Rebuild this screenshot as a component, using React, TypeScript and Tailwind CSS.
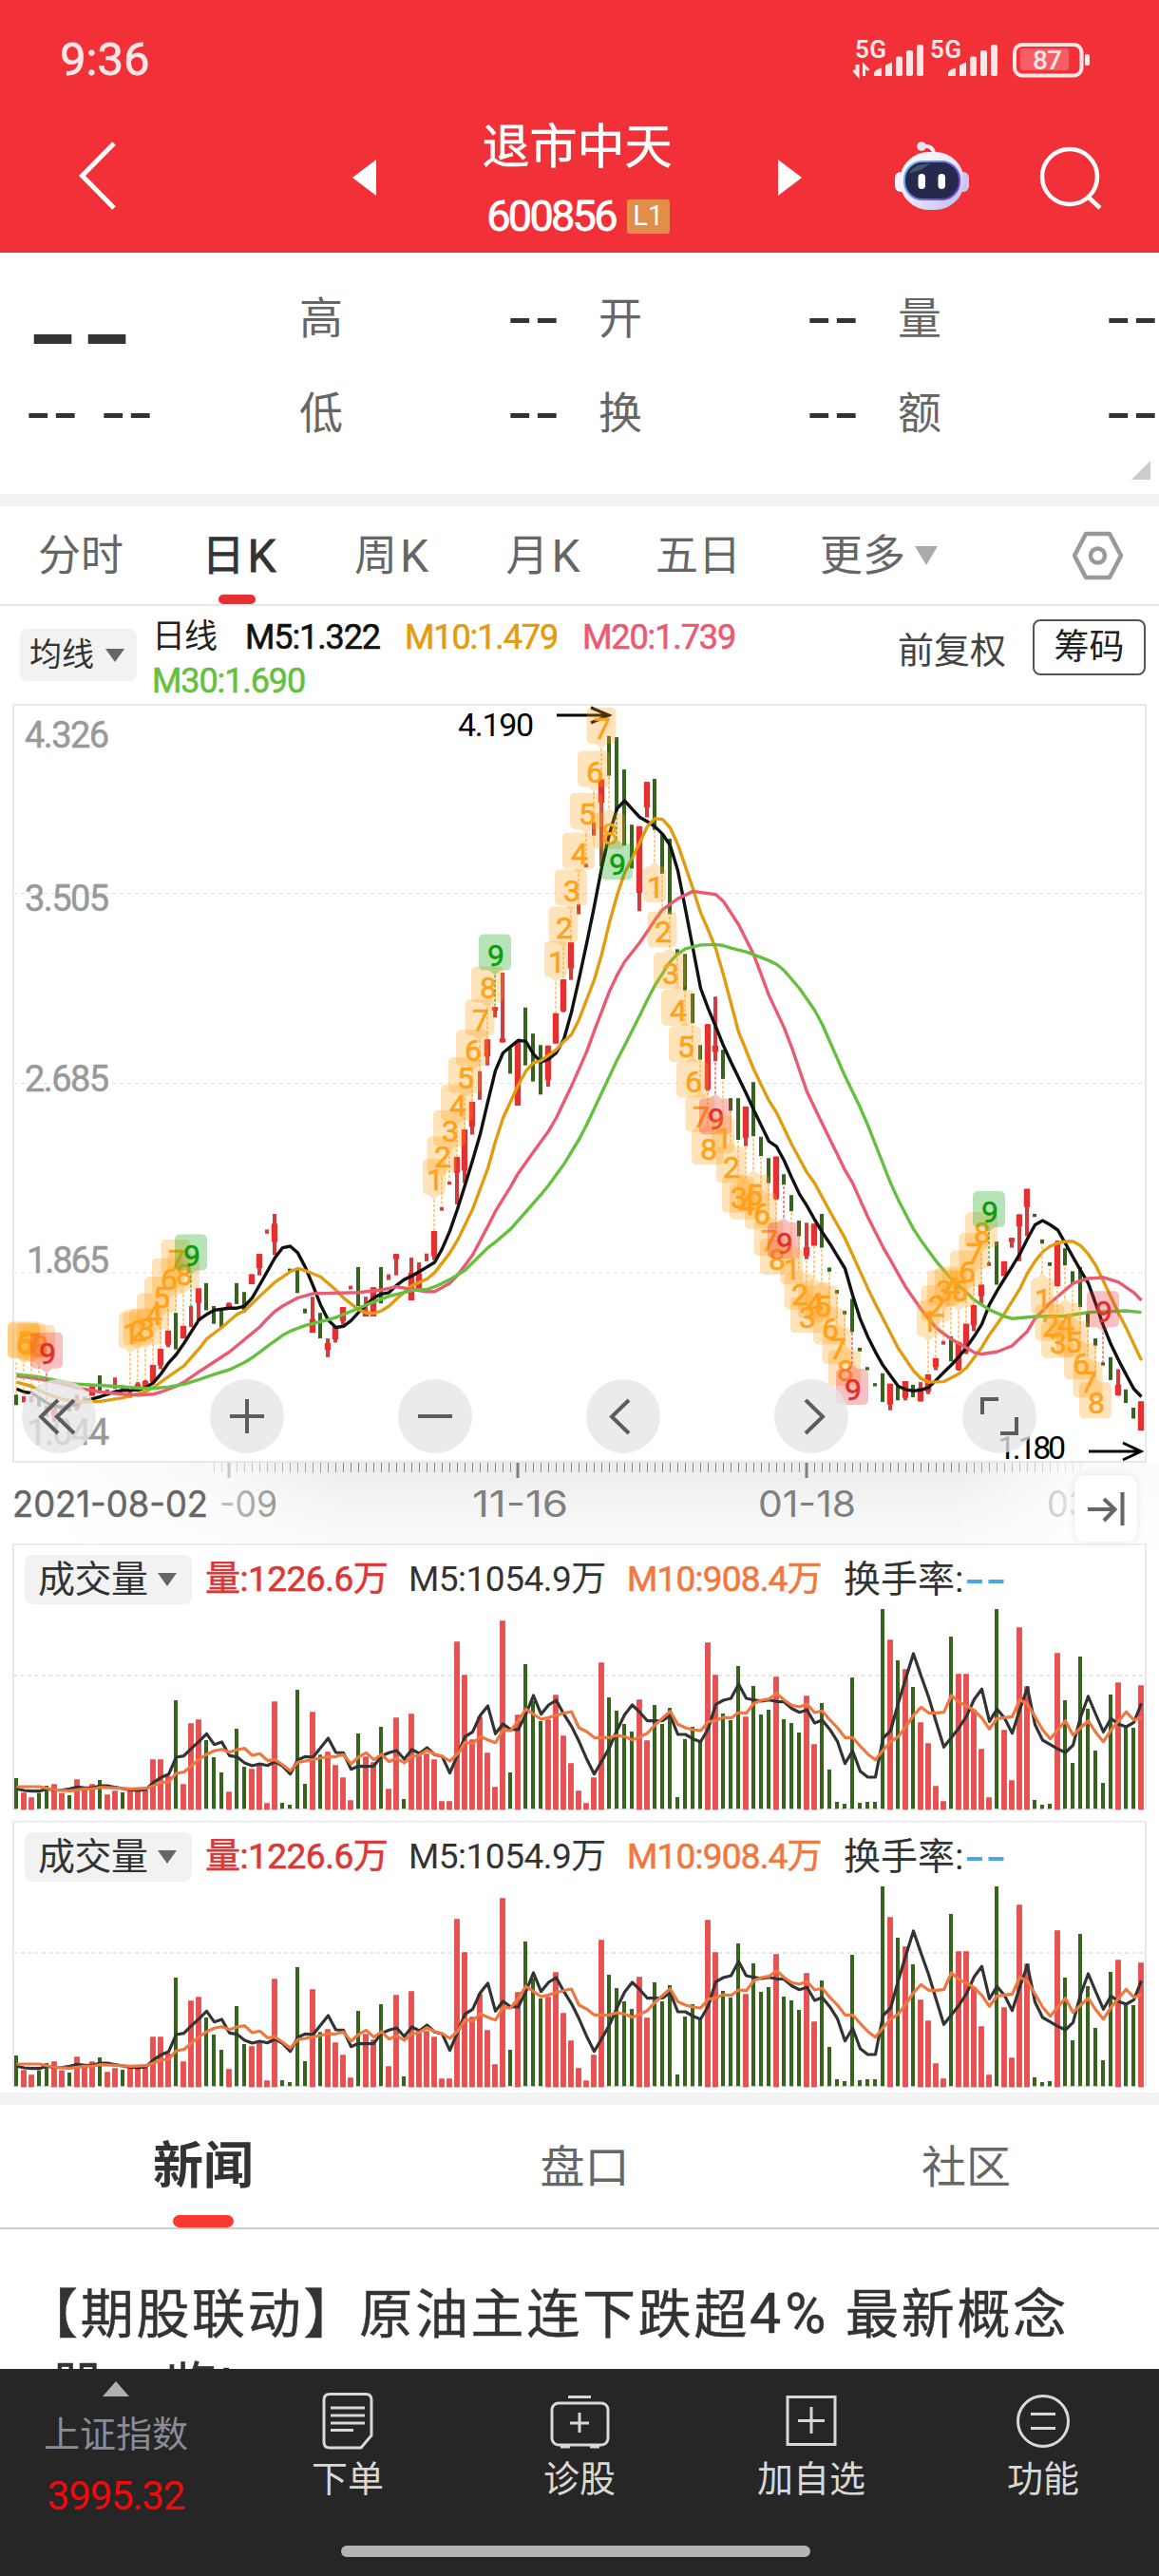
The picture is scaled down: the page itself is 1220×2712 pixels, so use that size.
import React from "react";

type Candle = [number, "r" | "g", number, number, number?, number?];
type Badge = [number, number, number, "up" | "down"];

const numFont = "font-[Roboto,'Noto_Sans_CJK_SC',sans-serif]";

// index, colour, high, low, body top, body bottom
const candles: Candle[] = [
  [0, "g", 1346, 1366], [1, "r", 1349, 1361], [2, "r", 1349, 1361], [3, "g", 1350, 1369], [4, "g", 1368, 1388],
  [5, "r", 1362, 1398, 1366, 1385], [6, "r", 1372, 1380], [7, "g", 1370, 1378], [8, "r", 1346, 1376, 1355, 1372], [9, "r", 1350, 1362],
  [10, "r", 1330, 1348, 1330, 1348], [11, "g", 1309, 1340], [12, "r", 1336, 1348], [13, "r", 1313, 1335], [14, "g", 1328, 1340],
  [15, "r", 1338, 1352], [16, "r", 1322, 1338, 1326, 1338], [17, "r", 1318, 1334, 1320, 1334], [18, "r", 1289, 1322, 1289, 1322], [19, "r", 1258, 1297, 1258, 1290],
  [20, "r", 1223, 1255, 1223, 1250], [21, "g", 1189, 1259], [22, "r", 1214, 1238, 1214, 1238], [23, "r", 1176, 1216], [24, "r", 1142, 1205, 1142, 1170],
  [25, "g", 1132, 1184], [26, "g", 1176, 1210], [27, "g", 1184, 1218], [28, "r", 1169, 1180, 1171, 1180], [29, "g", 1132, 1172],
  [30, "g", 1149, 1188], [31, "r", 1115, 1134, 1115, 1134], [32, "r", 1076, 1117, 1076, 1103], [33, "r", 1029, 1037], [34, "r", 999, 1078, 1018, 1053],
  [36, "g", 1104, 1109], [37, "g", 1105, 1151], [38, "g", 1181, 1190], [39, "r", 1158, 1227, 1201, 1227], [40, "g", 1189, 1238],
  [41, "r", 1238, 1274, 1247, 1260], [42, "r", 1215, 1246, 1215, 1240], [43, "r", 1178, 1212, 1178, 1205], [44, "r", 1137, 1144], [45, "g", 1101, 1176],
  [46, "r", 1158, 1196, 1185, 1196], [47, "r", 1140, 1196, 1140, 1196], [48, "g", 1101, 1171], [49, "r", 1115, 1126], [50, "r", 1076, 1117, 1076, 1086],
  [52, "r", 1083, 1165, 1112, 1165], [53, "r", 1092, 1145, 1113, 1145], [54, "r", 1075, 1090], [55, "r", 1032, 1088, 1032, 1080], [56, "r", 986, 993],
  [57, "r", 937, 943], [58, "r", 890, 981, 890, 920], [59, "r", 837, 940, 837, 916], [60, "r", 784, 847, 784, 832], [61, "r", 725, 780],
  [62, "r", 664, 714, 664, 697], [63, "r", 602, 622, 602, 609], [64, "r", 536, 670, 662, 670], [65, "g", 681, 730], [66, "r", 668, 791, 668, 791],
  [67, "g", 603, 714], [68, "g", 653, 745], [69, "g", 675, 770], [70, "r", 676, 755, 676, 742], [71, "r", 614, 672, 614, 672],
  [72, "r", 549, 612, 549, 610], [73, "r", 478, 550, 478, 528], [74, "r", 405, 424], [75, "r", 327, 334], [76, "r", 248, 273],
  [77, "r", 165, 332, 165, 210], [78, "g", 82, 158], [79, "g", 84, 225], [80, "g", 146, 292], [81, "g", 252, 336],
  [82, "r", 255, 418, 255, 383], [83, "r", 170, 238, 170, 219], [84, "g", 164, 262], [85, "g", 270, 346], [86, "g", 279, 424],
  [87, "g", 491, 500], [88, "g", 500, 570], [89, "g", 576, 633], [90, "g", 675, 703], [91, "r", 635, 763, 635, 760],
  [92, "r", 582, 706, 676, 688], [93, "g", 684, 740], [94, "g", 777, 801], [95, "g", 777, 857], [96, "r", 793, 869, 793, 853],
  [97, "g", 746, 850], [98, "g", 851, 888], [99, "g", 892, 940], [100, "r", 889, 972, 889, 970], [101, "g", 923, 943],
  [102, "g", 963, 994], [103, "g", 1012, 1042], [104, "r", 1016, 1086, 1063, 1080], [105, "r", 1018, 1060, 1018, 1060], [106, "g", 999, 1064],
  [107, "g", 1102, 1110], [108, "g", 1145, 1152], [109, "g", 1185, 1192], [110, "g", 1162, 1226], [111, "g", 1256, 1263],
  [112, "g", 1293, 1299], [113, "g", 1324, 1330], [114, "g", 1305, 1360], [115, "r", 1325, 1376, 1325, 1365], [116, "g", 1330, 1357],
  [117, "r", 1320, 1357, 1320, 1352], [118, "g", 1327, 1351], [119, "r", 1322, 1359, 1333, 1359], [120, "r", 1307, 1345, 1307, 1340], [121, "r", 1276, 1299, 1276, 1293],
  [122, "r", 1243, 1250], [123, "g", 1234, 1282], [124, "r", 1245, 1300, 1245, 1298], [125, "r", 1210, 1268, 1210, 1263], [126, "r", 1174, 1224, 1174, 1213],
  [127, "r", 1135, 1171, 1135, 1157], [128, "r", 1092, 1099], [129, "g", 1052, 1135], [130, "r", 1090, 1118, 1090, 1118], [131, "r", 1045, 1064, 1045, 1053],
  [132, "r", 1000, 1090, 1000, 1023], [133, "r", 951, 1042, 951, 986], [134, "g", 999, 1005], [135, "g", 1048, 1056], [136, "g", 1092, 1099],
  [137, "r", 1050, 1138, 1053, 1138], [138, "g", 1065, 1098], [139, "g", 1109, 1135], [140, "g", 1101, 1178], [141, "g", 1190, 1216],
  [142, "g", 1238, 1252], [143, "g", 1284, 1290], [144, "g", 1274, 1318], [145, "r", 1297, 1348, 1327, 1347], [146, "g", 1336, 1362],
  [147, "g", 1371, 1392], [148, "r", 1359, 1415, 1359, 1415],
];

const ma5 = "0:1335 1:1341 2:1343 3:1352 4:1362 5:1368 6:1370 7:1367 8:1363 9:1358 10:1354 11:1350 12:1345 13:1340 14:1338 16:1337 17:1332 18:1323 19:1306 20:1285 21:1269 22:1248 23:1225 24:1202 25:1192 26:1184 27:1182 28:1180 29:1180 30:1176 31:1160 32:1135 33:1109 34:1083 35:1064 36:1061 37:1074 38:1102 39:1137 40:1174 41:1203 42:1217 43:1215 44:1204 45:1188 46:1174 47:1160 48:1153 49:1150 50:1136 51:1125 52:1118 53:1110 54:1101 55:1092 56:1066 57:1032 58:990 59:944 60:896 61:846 62:784 63:724 64:690 65:678 66:666 67:668 68:692 69:708 70:702 71:690 72:664 73:612 74:548 75:480 76:409 77:333 78:270 79:221 80:206 81:222 82:238 83:246 84:256 85:270 86:292 87:340 88:414 89:490 90:566 91:605 92:640 93:676 94:708 95:738 96:768 97:800 98:830 99:860 100:870 101:897 102:930 103:961 104:984 105:1010 106:1034 107:1056 108:1080 109:1104 110:1155 111:1201 112:1235 113:1264 114:1290 115:1310 116:1330 117:1336 118:1339 119:1337 120:1332 121:1318 122:1303 123:1289 124:1273 125:1255 126:1234 127:1211 128:1173 129:1147 130:1123 131:1100 132:1076 133:1047 134:1020 135:1012 136:1020 137:1030 138:1056 139:1082 140:1108 141:1132 142:1172 143:1214 144:1250 145:1280 146:1308 147:1335 148:1350";
const ma10 = "0:1322 2:1330 4:1345 6:1355 8:1360 11:1359 14:1352 17:1340 18:1332 20:1311 22:1291 24:1258 25:1239 27:1217 29:1192 30:1185 32:1157 34:1130 36:1110 37:1104 38:1108 40:1120 42:1145 43:1160 45:1183 46:1189 47:1190 48:1185 49:1176 50:1162 52:1137 54:1124 55:1112 57:1074 58:1050 60:990 62:912 63:860 64:815 66:752 67:725 68:709 69:705 71:684 72:668 73:655 74:626 76:550 77:500 78:440 79:388 80:344 81:316 82:286 83:255 84:240 85:242 86:258 87:290 89:375 90:421 91:454 92:490 93:540 95:650 97:722 99:782 100:805 102:866 104:920 105:940 107:994 109:1046 112:1142 113:1172 114:1200 116:1257 118:1300 119:1315 120:1322 122:1321 124:1306 125:1294 127:1255 128:1231 130:1190 132:1143 133:1113 134:1090 135:1072 136:1061 137:1055 138:1052 139:1052 140:1060 141:1076 142:1098 143:1128 145:1190 146:1218 148:1280";
const ma20 = "0:1310 3:1316 6:1325 8:1333 11:1341 14:1345 16:1347 18:1345 19:1341 21:1330 22:1322 24:1302 26:1283 28:1264 30:1240 32:1216 33:1200 34:1186 35:1176 37:1160 39:1152 45:1150 46:1148 48:1145 49:1142 50:1139 52:1144 54:1148 55:1148 57:1132 58:1117 60:1078 62:1023 63:994 65:947 66:921 68:880 70:840 71:815 73:754 75:688 76:648 77:610 78:572 79:541 80:515 82:478 84:435 85:415 87:394 89:380 92:386 93:399 95:444 97:502 99:580 101:642 102:680 104:765 106:826 108:885 109:915 110:940 112:1005 114:1063 115:1088 117:1140 119:1182 121:1218 123:1240 125:1256 126:1265 127:1268 129:1264 131:1252 133:1224 134:1200 136:1170 138:1145 139:1132 141:1123 143:1121 145:1130 147:1150 148:1165";
const ma30 = "0:1307 3:1312 5:1318 8:1326 12:1329 16:1333 18:1334 20:1331 22:1326 24:1317 26:1307 28:1298 30:1284 31:1275 33:1253 35:1232 36:1224 38:1213 40:1206 42:1198 45:1180 47:1168 49:1157 52:1146 54:1144 55:1139 57:1125 59:1107 62:1064 63:1053 65:1028 67:995 69:962 70:944 72:904 74:856 75:828 77:766 79:704 80:676 82:618 83:588 84:560 86:515 87:500 88:490 90:483 92:482 93:484 94:489 96:496 98:507 99:513 100:520 101:532 103:566 105:608 106:635 109:735 110:765 111:795 112:829 113:866 115:940 116:972 118:1028 119:1050 121:1090 123:1124 125:1150 126:1164 128:1183 130:1196 131:1200 134:1196 138:1195 141:1188 146:1185 148:1188";

// index, digit, centre, side of the candle
const badges: Badge[] = [
  [0, 5, 1240, "up"], [1, 6, 1243, "up"], [2, 7, 1243, "up"], [3, 8, 1247, "up"], [4, 9, 1261, "up"],
  [15, 1, 1223, "up"], [16, 2, 1217, "up"], [17, 3, 1215, "up"], [18, 4, 1186, "up"], [19, 5, 1154, "up"],
  [20, 6, 1119, "up"], [21, 7, 1083, "up"], [22, 8, 1110, "up"], [23, 9, 1073, "up"],
  [55, 1, 928, "up"], [56, 2, 885, "up"], [57, 3, 835, "up"], [58, 4, 786, "up"], [59, 5, 733, "up"],
  [60, 6, 680, "up"], [61, 7, 622, "up"], [62, 8, 559, "up"], [63, 9, 497, "up"],
  [71, 1, 510, "up"], [72, 2, 444, "up"], [73, 3, 373, "up"], [74, 4, 302, "up"], [75, 5, 226, "up"],
  [76, 6, 145, "up"], [77, 7, 62, "up"], [78, 8, 264, "down"], [79, 9, 323, "down"],
  [84, 1, 367, "down"], [85, 2, 453, "down"], [86, 3, 532, "down"], [87, 4, 603, "down"], [88, 5, 673, "down"],
  [89, 6, 741, "down"], [90, 7, 807, "down"], [91, 8, 870, "down"], [92, 9, 812, "down"],
  [93, 1, 848, "down"], [94, 2, 905, "down"], [95, 3, 962, "down"], [96, 4, 975, "down"], [97, 5, 958, "down"],
  [98, 6, 993, "down"], [99, 7, 1045, "down"], [100, 8, 1081, "down"], [101, 9, 1050, "down"],
  [102, 1, 1100, "down"], [103, 2, 1148, "down"], [104, 3, 1193, "down"], [105, 4, 1165, "down"], [106, 5, 1171, "down"],
  [107, 6, 1215, "down"], [108, 7, 1253, "down"], [109, 8, 1295, "down"], [110, 9, 1331, "down"],
  [120, 1, 1200, "up"], [121, 2, 1171, "up"], [122, 3, 1141, "up"], [123, 4, 1135, "up"], [124, 5, 1142, "up"],
  [125, 6, 1104, "up"], [126, 7, 1070, "up"], [127, 8, 1030, "up"], [128, 9, 990, "up"],
  [135, 1, 1157, "down"], [136, 2, 1208, "down"], [137, 3, 1241, "down"], [138, 4, 1205, "down"], [139, 5, 1239, "down"],
  [140, 6, 1282, "down"], [141, 7, 1317, "down"], [142, 8, 1357, "down"], [143, 9, 1182, "up"],
];

const greenNines = [23, 63, 79, 128];

// negative = falling day
const volumes = [
  -756, 802, 817, -803, -780, 775, 803, -810, 760, 795, 775, -762, 808, 796, -801, 795, 797, 795, 697, 697,
  750, -510, 775, 583, 571, -636, -690, -738, 799, -600, -720, 727, 715, 835, 514, -834, -840, -477, -774, 547,
  -682, 673, 715, 754, 826, -615, 688, 706, -594, 790, 565, -822, 553, 685, 679, 697, 829, 829, 325, 430,
  634, 562, 676, 784, 259, -738, 556, -396, -512, -576, 571, 493, 622, 709, 796, 835, 754, 391, -501, -543,
  -585, -609, 508, 637, -525, -585, -534, -816, -633, -594, -636, 328, 430, -552, -573, -402, 562, -465, -555, -540,
  436, -570, -582, -612, 496, 649, -519, -729, -831, -837, -438, -834, -831, -831, -222, 319, -384, 412, -468, 580,
  646, 781, 829, -309, 427, 427, 540, 664, 817, -222, 604, 763, 280, 466, -825, -840, -837, 361, -510, -708,
  -372, -537, -669, -771, -492, 454, -590, -597, 463,
];
const vma5 = "0:790 1:795 2:797 3:797 4:790 5:793 6:794 7:790 8:784 9:787 10:787 11:780 12:780 13:785 14:789 15:793 16:795 17:792 18:770 19:754 20:744 21:690 22:686 23:662 24:640 25:616 26:650 27:642 28:685 29:689 30:708 31:717 32:711 33:716 34:704 35:718 36:743 37:698 38:688 39:690 40:660 41:630 42:675 43:676 44:728 45:718 46:719 47:718 48:686 49:676 50:669 51:696 52:666 53:678 54:660 55:682 56:688 57:740 58:684 59:625 60:610 61:558 62:528 63:616 64:585 65:602 66:603 67:555 68:495 69:554 70:525 71:510 72:554 73:592 74:640 75:695 76:743 77:702 78:660 79:605 80:556 81:525 82:548 83:575 84:575 85:574 86:558 87:618 88:618 89:632 90:641 91:600 92:523 93:510 94:504 95:459 96:504 97:509 98:513 99:509 100:514 101:515 102:536 103:548 104:541 105:582 106:573 107:602 108:640 109:710 110:670 111:734 112:753 113:753 114:630 115:606 116:520 117:440 118:363 119:433 120:500 121:580 122:658 123:628 124:597 125:560 126:507 127:475 128:577 129:538 130:567 131:614 132:540 133:470 134:587 135:636 136:650 137:664 138:675 139:652 140:563 141:498 142:555 143:610 144:568 145:586 146:594 147:580 148:520";
const vma10 = "0:783 3:783 4:788 5:793 7:796 9:790 10:790 11:785 13:787 15:790 17:788 18:780 19:770 20:768 21:741 22:737 23:717 24:697 25:681 26:670 27:665 28:674 29:666 30:662 31:684 32:679 33:700 34:698 35:714 36:733 37:706 38:702 41:688 42:688 43:682 44:711 45:689 46:676 47:698 48:681 49:704 50:693 51:708 52:688 53:683 54:668 55:680 56:687 57:702 58:680 59:643 60:647 61:625 62:635 63:644 64:604 65:606 66:575 67:538 68:554 69:570 70:565 71:557 72:551 73:546 74:597 75:609 76:628 77:628 78:628 79:621 80:625 81:635 82:626 83:614 84:588 85:566 86:545 87:586 88:597 89:603 90:606 91:578 92:574 93:564 94:566 95:549 96:551 97:520 98:510 99:506 100:488 101:510 102:526 103:531 104:522 105:549 106:544 107:572 108:597 109:628 110:628 111:655 112:680 113:698 114:668 115:641 116:625 117:594 118:558 119:532 120:550 121:550 122:548 123:495 124:516 125:528 126:542 127:566 128:601 129:568 130:565 131:562 132:508 133:522 134:562 135:603 136:632 137:603 138:575 139:620 140:597 141:575 142:612 143:641 144:604 145:575 146:547 147:572 148:565";

const px = (i: number) => 17 + i * 8;
const ky = (v: number) => v * 0.5485 - 8;
const vy = (v: number) => v / 3 - 5;

const toPoints = (data: string, y: (v: number) => number) =>
  data
    .split(" ")
    .map((p) => {
      const [i, v] = p.split(":").map(Number);
      return `${px(i) + 0.5},${y(v).toFixed(1)}`;
    })
    .join(" ");

const StatusBar: React.FC = () => (
  <div className="flex h-[125px] justify-between pl-[63px] pr-[50px] pt-[35px] text-[#ffe6e6]">
    <span className="text-[49px] leading-[56px] [-webkit-text-stroke:0.8px]">9:36</span>
    <svg width="280" height="56" viewBox="890 35 280 56" fill="#ffe6e6">
      <text x="900" y="60.5" fontSize="26" fontWeight="600" textLength="33">5G</text>
      <text x="979" y="60.5" fontSize="26" fontWeight="600" textLength="33">5G</text>
      <path d="M902 68v9M898.500 74l4.500 5V68M909.500 80V69l5 5" fill="none" stroke="#ffe6e6" strokeWidth="3" />
      {[0, 78].map((dx) => (
        <g key={dx}>
          <path d={`M${920 + dx} 80v-3q1-4 8-5.500v8.500z`} />
          <path d={`M${932 + dx} 80V69q2-2 7-3.500V80z`} />
          <rect x={943 + dx} y="59.500" width="7" height="20.500" rx="2" />
          <rect x={954 + dx} y="53" width="7" height="27" rx="2" />
          <rect x={965 + dx} y="47" width="7" height="33" rx="2" />
        </g>
      ))}
      <rect x="1068" y="47" width="70.500" height="32.500" rx="8" fill="none" stroke="#ffe6e6" strokeWidth="4" />
      <rect x="1074" y="51" width="51" height="23" rx="3" fillOpacity=".25" />
      <rect x="1142" y="57" width="5" height="12" rx="2" />
      <text x="1087" y="73" fontSize="28" fontWeight="500" textLength="31">87</text>
    </svg>
  </div>
);

const Robot: React.FC = () => (
  <svg width="80" height="74" viewBox="0 0 80 74">
    <defs>
      <linearGradient id="shell" x1="0" y1="0" x2="1" y2="1">
        <stop offset="0" stopColor="#ffffff" />
        <stop offset=".5" stopColor="#ebe9fb" />
        <stop offset="1" stopColor="#b9b7ea" />
      </linearGradient>
      <linearGradient id="rim" x1="0" y1="0" x2="1" y2=".6">
        <stop offset="0" stopColor="#63c6e8" />
        <stop offset="1" stopColor="#7a3be0" />
      </linearGradient>
    </defs>
    <path d="M29 6q12-2 13 8" fill="none" stroke="#efeefe" strokeWidth="4" />
    <circle cx="29" cy="6" r="4.800" fill="#e6e4f6" />
    <rect x="1" y="33" width="12" height="21" rx="6" fill="#f1f0fe" />
    <rect x="67" y="33" width="12" height="21" rx="6" fill="#c9c7f2" />
    <rect x="6" y="12" width="68" height="61" rx="31" fill="url(#shell)" />
    <rect x="11" y="22" width="58" height="40" rx="19" fill="#25294c" stroke="url(#rim)" strokeWidth="2" />
    <path d="M16 34q6-10 22-10-8 8-22 10" fill="#4a5272" />
    <rect x="25.500" y="35" width="7.500" height="16" rx="3.700" fill="#fff" />
    <rect x="46.500" y="35" width="7.500" height="16" rx="3.700" fill="#fff" />
  </svg>
);

const Header: React.FC = () => (
  <div className="h-[266px] bg-[#f13038] text-white">
    <StatusBar />
    <div className="flex h-[125px]">
      <svg className="ml-[80px] mt-[20px]" width="46" height="76" fill="none" stroke="#fff" strokeWidth="5">
        <path d="M40 6L6.500 40L40 74" />
      </svg>
      <svg className="ml-[245px] mt-[43px]" width="25" height="38" fill="#fff">
        <path d="M25 0V38L0 19z" />
      </svg>
      <div className="flex w-[423px] flex-col items-center">
        <span className="mt-[1px] text-[50px] leading-[58px] [-webkit-text-stroke:0.6px]">退市中天</span>
        <div className="mt-[14px] flex items-center gap-[12px] pl-[2px]">
          <span className="text-[45px] leading-[60px] tracking-[-2.7px] [-webkit-text-stroke:0.8px]">600856</span>
          <span className="flex h-[36px] w-[45px] items-center justify-center rounded-[3px] bg-[#e08e48] text-[29px]">L1</span>
        </div>
      </div>
      <svg className="mt-[43px]" width="25" height="38" fill="#fff">
        <path d="M0 0V38L25 19z" />
      </svg>
      <div className="ml-[97px] mt-[23px]">
        <Robot />
      </div>
      <svg className="ml-[72px] mt-[28px]" width="72" height="70" fill="none" stroke="#fff" strokeWidth="4.500">
        <circle cx="33" cy="33" r="29" />
        <path d="M52 54L65 66" />
      </svg>
    </div>
  </div>
);

const Quote: React.FC = () => (
  <div className="flex h-[254px]">
    <div className="w-[312px] pl-[26px] font-[Inter] text-[#333]">
      <div className="ml-[1px] h-[123px] pt-[8px] text-[124px] leading-[155px]">--</div>
      <div className="flex gap-[22px] text-[62px] leading-[92px]">
        <span>--</span>
        <span>--</span>
      </div>
    </div>
    {[["高", "低"], ["开", "换"], ["量", "额"]].map((col) => (
      <div key={col[0]} className="w-[315px] shrink-0 pt-[19px]">
        {col.map((label) => (
          <div key={label} className="flex h-[100px] items-center">
            <span className="w-[221px] pl-[3px] text-[46px] text-[#666]">{label}</span>
            <span className="font-[Inter] text-[62px] leading-none text-[#333]">--</span>
          </div>
        ))}
      </div>
    ))}
    <svg className="-ml-[66px] mt-[219px] shrink-0" width="20" height="20">
      <path d="M20 0V20H0z" fill="#ccc" />
    </svg>
  </div>
);

const Periods: React.FC = () => (
  <div className="flex h-[105px] border-b-2 border-[#e6e6e6] pt-[2px] text-[45px] text-[#666]">
    <span className="flex w-[170px] items-center justify-center">分时</span>
    <div className="relative flex w-[163px] items-center justify-center gap-[3px] text-[#333] [-webkit-text-stroke:0.8px]">
      <span>日</span>
      <span className="text-[48px]">K</span>
      <div className="absolute bottom-0 left-[60px] h-[10px] w-[39px] rounded-full bg-[#e62f2f]" />
    </div>
    <span className="flex w-[158px] items-center justify-center gap-[3px]">周<span className="text-[48px]">K</span></span>
    <span className="flex w-[161px] items-center justify-center gap-[3px]">月<span className="text-[48px]">K</span></span>
    <span className="flex w-[166px] items-center justify-center">五日</span>
    <span className="flex w-[135px] items-center justify-end">更多</span>
    <svg className="ml-[10px] mt-[40px]" width="24" height="20">
      <path d="M0 0H24L12 20z" fill="#aaa" />
    </svg>
    <svg className="ml-[139px] mt-[22px]" width="60" height="56" fill="none" stroke="#999" strokeWidth="4.500" strokeLinejoin="round">
      <path d="M17 5H42L54 28L42 51H17L5 28z" />
      <circle cx="29.500" cy="28" r="7.500" />
    </svg>
  </div>
);

const Averages: React.FC = () => (
  <div className="flex h-[100px] text-[34px]">
    <div className="ml-[21px] mt-[24px] flex h-[55px] w-[123px] items-center gap-[12px] rounded-[8px] bg-[#f2f2f2] pl-[10px] text-[#333]">
      均线
      <svg width="20" height="14"><path d="M0 0H20L10 14z" fill="#666" /></svg>
    </div>
    <div className="ml-[16px] w-[785px] pt-[10px] text-[36px] leading-[46px] tracking-[-1.1px] [-webkit-text-stroke:0.6px]">
      <div className="flex">
        <span className="w-[98px] text-[35px] text-[#222] [-webkit-text-stroke:0px]">日线</span>
        <span className="w-[168px] text-[#111]">M5:1.322</span>
        <span className="w-[187px] text-[#e29c10]">M10:1.479</span>
        <span className="text-[#ea5a72]">M20:1.739</span>
      </div>
      <div className="text-[#66c040]">M30:1.690</div>
    </div>
    <span className="pt-[21px] text-[38px] leading-[52px] text-[#444]">前复权</span>
    <span className="ml-[28px] mt-[14px] flex h-[59px] w-[119px] shrink-0 items-center justify-center rounded-[8px] border-2 border-[#555] text-[37px] text-[#222]">筹码</span>
  </div>
);

const ChartButtons: React.FC = () => (
  <g fill="none" stroke="#5c5c5c" strokeWidth="4">
    {[62, 260, 458, 656, 854, 1052].map((x) => (
      <circle key={x} cx={x} cy="753" r="39" fill="#e6e6e6" fillOpacity=".78" stroke="none" />
    ))}
    <path d="M61 736L43 753.500L61 771M78 736L60 753.500L78 771" />
    <path d="M242 753H278M260 735V771" />
    <path d="M440 753H476" />
    <path d="M662 736L644 753.500L662 771" />
    <path d="M848 736L866 753.500L848 771" />
    <path d="M1034 751V735H1051M1053 771H1070V754" />
  </g>
);

const KChart: React.FC = () => (
  <svg className="block shrink-0" width="1220" height="802">
    <rect x="14" y="4" width="1192" height="797" fill="none" stroke="#e8e8e8" strokeWidth="2" />
    {[202.5, 402.5, 602].map((y) => (
      <path key={y} d={`M14 ${y}H1206`} stroke="#e0e0e0" strokeDasharray="4 4" />
    ))}
    <g fill="#999" stroke="#999" strokeWidth=".5" fontSize="38">
      <text x="26" y="49" textLength="89">4.326</text>
      <text x="26" y="221" textLength="89">3.505</text>
      <text x="26" y="411" textLength="89">2.685</text>
      <text x="28" y="602" textLength="87">1.865</text>
      <text x="28" y="783" textLength="87">1.044</text>
    </g>
    {candles.map(([i, c, high, low, top, bottom]) => (
      <g key={i}>
        <rect x={px(i) - 2} y={ky(high)} width="4" height={ky(low) - ky(high)} fill={c === "r" ? "#d23c3c" : "#37641d"} />
        {top !== undefined && bottom !== undefined && (
          <rect x={px(i) - 3.2} y={ky(top)} width="6.4" height={ky(bottom) - ky(top)} fill="#e62f2f" />
        )}
      </g>
    ))}
    <g fill="none" strokeWidth="3.400" strokeLinejoin="round">
      <polyline points={toPoints(ma5, ky)} stroke="#111" />
      <polyline points={toPoints(ma10, ky)} stroke="#e29c10" />
      <polyline points={toPoints(ma20, ky)} stroke="#ea5a72" />
      <polyline points={toPoints(ma30, ky)} stroke="#66c040" />
    </g>
    <path d="M586 15H640M622 7L641 15L622 23" fill="none" stroke="#000" strokeWidth="3" />
    <text x="482" y="37" fontSize="34" textLength="80" fill="#000">4.190</text>
    {badges.map(([i, n, v, side]) => {
      const color = n < 9 ? "#ffa21a" : greenNines.includes(i) ? "#0d9c0d" : "#e22e2e";
      const fill = n < 9 ? "#ffa21a" : greenNines.includes(i) ? "#12a512" : "#e83030";
      const w = n === 1 ? 24 : n === 2 || n === 7 ? 31 : 34;
      const x = Math.max(px(i), 8 + w / 2);
      const y = ky(v);
      const candle = candles.find((c) => c[0] === i)!;
      const tip = side === "up" ? y + 24 : y - 24;
      const end = side === "up" ? ky(candle[2]) : ky(candle[3]);
      const base = side === "up" ? y + 19 : y - 19;
      return (
        <g key={i}>
          <path d={`M${px(i)} ${tip}V${end}`} stroke={fill} strokeOpacity=".55" strokeWidth="2" strokeDasharray="3 2" />
          <rect x={x - w / 2} y={y - 19} width={w} height="38" rx="5" fill={fill} fillOpacity=".3" />
          <path d={`M${x - 6} ${base}H${x + 6}L${x} ${tip}z`} fill={fill} fillOpacity=".3" />
          <text x={x + 1} y={y + 14} fontSize="32" stroke={color} strokeWidth=".6" textAnchor="middle" fill={color}>{n}</text>
        </g>
      );
    })}
    <text x="1050" y="798" fontSize="34" textLength="72" fill="#000">1.180</text>
    <path d="M1146 790H1200M1182 781L1201 790L1182 799" fill="none" stroke="#000" strokeWidth="3" />
    <ChartButtons />
  </svg>
);

const TimeAxis: React.FC = () => (
  <div className="relative h-[85px] shrink-0">
    <svg className="block" width="1220" height="91">
      <defs>
        <linearGradient id="shade" x1="0" y1="0" x2="0" y2="1">
          <stop offset="0" stopColor="#ebebeb" />
          <stop offset=".5" stopColor="#f5f5f5" />
          <stop offset="1" stopColor="#fbfbfb" />
        </linearGradient>
        <linearGradient id="fade" x1="0" y1="0" x2="1" y2="0">
          <stop offset=".03" stopColor="#fff" />
          <stop offset=".18" stopColor="#fff" stopOpacity=".65" />
          <stop offset=".3" stopColor="#fff" stopOpacity="0" />
          <stop offset=".82" stopColor="#fff" stopOpacity="0" />
          <stop offset=".93" stopColor="#fff" stopOpacity=".8" />
        </linearGradient>
      </defs>
      <rect width="1220" height="91" fill="url(#shade)" />
      {Array.from({ length: 115 }, (_, k) => (
        <rect key={k} x={225 + k * 8} y="0" width="1" height="10" fill="#8c8c8c" />
      ))}
      {[241, 545, 849].map((x) => (
        <rect key={x} x={x - 1.5} y="0" width="3" height="16" fill="#808080" />
      ))}
      <g fill="#808080" fontSize="38" className="font-[Inter]">
        <text x="231" y="57" textLength="61" lengthAdjust="spacingAndGlyphs" fill="#666">-09</text>
        <text x="497" y="57" textLength="101" lengthAdjust="spacingAndGlyphs">11-16</text>
        <text x="798" y="57" textLength="103" lengthAdjust="spacingAndGlyphs">01-18</text>
        <text x="1102" y="57" textLength="45" lengthAdjust="spacingAndGlyphs">03</text>
      </g>
      <rect width="1220" height="91" fill="url(#fade)" />
      <text x="13" y="57" fontSize="38" className="font-[Inter]" stroke="#666" strokeWidth=".5" textLength="206" lengthAdjust="spacingAndGlyphs" fill="#666">2021-08-02</text>
    </svg>
    <div className="absolute left-[1131px] top-[13px] flex h-[70px] w-[66px] items-center justify-center rounded-[12px] bg-white shadow-[0_0_8px_rgba(0,0,0,0.1)]">
      <svg width="40" height="40" fill="none" stroke="#666" strokeWidth="4">
        <path d="M1 21H29M18 10L29.500 21L18 33M37.500 3V38" />
      </svg>
    </div>
  </div>
);

const VolumePanel: React.FC<{ height: string }> = ({ height }) => (
  <div className={`relative shrink-0 ${height}`}>
    <svg className="block" width="1220" height="281">
      <path d="M14 280V0.500H1206V280" fill="none" stroke="#e8e8e8" strokeWidth="2" />
      <path d="M14 139H1206M14 279.500H1206" stroke="#e6e6e6" strokeWidth="2" strokeDasharray="4 3.500" />
      {volumes.map((v, i) =>
        v < 0 ? (
          <rect key={i} x={px(i) - 2} y={vy(-v)} width="4" height={vy(853) - vy(-v)} fill="#37641d" />
        ) : (
          <rect key={i} x={px(i) - 2.3} y={vy(v) + 0.5} width="4.600" height={vy(853) - vy(v)} fill="#ee5050" stroke="#dc4444" />
        )
      )}
      <g fill="none" strokeWidth="3.200" strokeLinejoin="round">
        <polyline points={toPoints(vma5, vy)} stroke="#333" />
        <polyline points={toPoints(vma10, vy)} stroke="#ee7742" />
      </g>
    </svg>
    <div className="absolute left-[26px] top-[12px] flex h-[52px] items-center text-[37px] tracking-[-0.5px] text-[#333]">
      <div className="flex h-[52px] w-[176px] items-center gap-[10px] rounded-[8px] bg-[#f2f2f2] pl-[14px]">
        <span className="text-[39px]">成交量</span>
        <svg width="20" height="14"><path d="M0 0H20L10 14z" fill="#666" /></svg>
      </div>
      <span className="ml-[14px] w-[214px] text-[#dc3636] [-webkit-text-stroke:0.6px]">量:1226.6万</span>
      <span className="w-[230px]">M5:1054.9万</span>
      <span className="w-[228px] tracking-[-0.8px] text-[#f07840] [-webkit-text-stroke:0.6px]">M10:908.4万</span>
      <span className="text-[39px] tracking-normal">换手率:</span>
      <span className="font-[Inter] text-[50px] leading-none text-[#4aa9e0]">--</span>
    </div>
  </div>
);

const News: React.FC = () => (
  <>
    <div className="flex h-[131px] shrink-0 border-b-2 border-[#ccc] text-[47px] text-[#666]">
      <div className="relative flex w-[428px] items-center justify-center pt-[3px] text-[53px] font-bold text-[#333]">
        新闻
        <div className="absolute bottom-0 left-[182px] h-[13px] w-[64px] rounded-full bg-[#fa3a30]" />
      </div>
      <span className="flex w-[375px] items-center justify-center pt-[3px]">盘口</span>
      <span className="flex items-center pl-[167px] pt-[3px]">社区</span>
    </div>
    <div className="h-[147px] shrink-0 overflow-hidden pl-[55px] pt-[49px] text-[56px] leading-[79px] tracking-[2.700px] text-[#333]">
      <p className="-ml-[29px] h-[79px] whitespace-nowrap [-webkit-text-stroke:0.5px]">
        【期股联动】原油主连下跌超<span className="text-[59px] tracking-[4px]">4%</span> 最新概念
      </p>
      <p className="[-webkit-text-stroke:0.5px]">股一览!</p>
    </div>
  </>
);

const BottomNav: React.FC = () => (
  <div className="flex h-[218px] shrink-0 flex-col bg-[#262626] text-[38px] text-[#d8d8d8]">
    <div className="flex h-[186px]">
      <div className="flex w-[244px] flex-col items-center pt-[13px]">
        <svg width="28" height="16"><path d="M14 0L28 16H0z" fill="#b0b0b0" /></svg>
        <span className="mt-[13px] leading-[54px] text-[#8c8c99]">上证指数</span>
        <span className="mt-[11px] text-[42px] leading-[54px] tracking-[-1.2px] text-[#f00a0a]">3995.32</span>
      </div>
      <div className="flex w-[244px] flex-col items-center pt-[24px]">
        <svg width="56" height="62" fill="none" stroke="#d8d8d8" strokeWidth="3">
          <path d="M9 2.500H47Q53 2.500 53 8.500V46L42 59H9Q3 59 3 53V8.500Q3 2.500 9 2.500z" />
          <path d="M10 17H46M10 25H46M10 33H46M10 40.500H34" />
        </svg>
        <span className="mt-[3px] leading-[54px]">下单</span>
      </div>
      <div className="flex w-[244px] flex-col items-center pt-[24px]">
        <svg width="64" height="62" fill="none" stroke="#d8d8d8" strokeWidth="3">
          <rect x="3" y="12" width="59" height="44" rx="7" />
          <path d="M20 5.500H44M32 22V43M22 33H42M12 58H22M43 58H53" />
        </svg>
        <span className="mt-[3px] leading-[54px]">诊股</span>
      </div>
      <div className="flex w-[244px] flex-col items-center pt-[24px]">
        <svg width="56" height="62" fill="none" stroke="#d8d8d8" strokeWidth="3">
          <rect x="3" y="5.500" width="50" height="50" />
          <path d="M28 16V44M14 30.500H42" />
        </svg>
        <span className="mt-[3px] leading-[54px]">加自选</span>
      </div>
      <div className="flex w-[244px] flex-col items-center pt-[24px]">
        <svg width="60" height="62" fill="none" stroke="#d8d8d8" strokeWidth="3">
          <circle cx="30" cy="31" r="26.500" />
          <path d="M17 23.500H43M17 38.500H43" />
        </svg>
        <span className="mt-[3px] leading-[54px]">功能</span>
      </div>
    </div>
    <div className="ml-[359px] h-[12px] w-[494px] rounded-full bg-[#b4b4b4]" />
  </div>
);

const App: React.FC = () => {
  return (
    <div className={`flex h-[2712px] w-[1220px] flex-col overflow-hidden bg-white ${numFont}`}>
      <Header />
      <Quote />
      <div className="h-[13px] shrink-0 bg-[#f3f3f3]" />
      <Periods />
      <Averages />
      <KChart />
      <TimeAxis />
      <VolumePanel height="h-[292px]" />
      <VolumePanel height="h-[286px]" />
      <div className="h-[13px] shrink-0 bg-[#f3f3f3]" />
      <News />
      <BottomNav />
    </div>
  );
};

export default App;
